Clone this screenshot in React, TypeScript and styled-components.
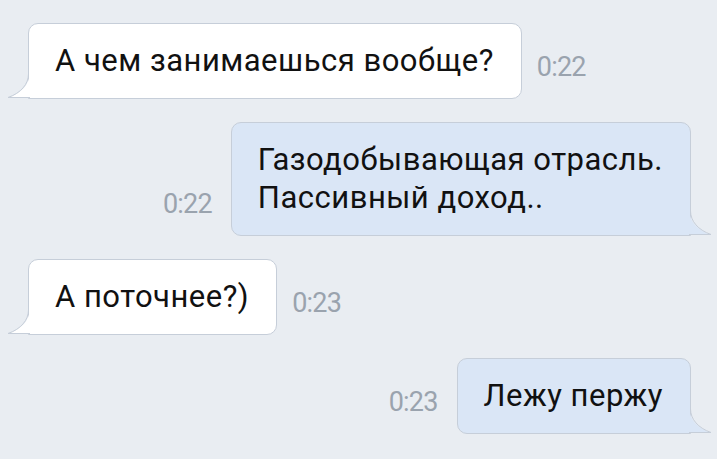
import styled, { createGlobalStyle } from "styled-components";

type Msg = {
  id: number;
  out: boolean;
  time: string;
  lines: string[];
};

const messages: Msg[] = [
  { id: 1, out: false, time: "0:22", lines: ["А чем занимаешься вообще?"] },
  {
    id: 2,
    out: true,
    time: "0:22",
    lines: ["Газодобывающая отрасль.", "Пассивный доход.."],
  },
  { id: 3, out: false, time: "0:23", lines: ["А поточнее?)"] },
  { id: 4, out: true, time: "0:23", lines: ["Лежу пержу"] },
];

const GlobalStyle = createGlobalStyle`
  html, body {
    margin: 0;
    padding: 0;
    background: #e9edf2;
  }
  body {
    font-family: Roboto, "Noto Sans", "Liberation Sans", sans-serif;
    -webkit-font-smoothing: antialiased;
  }
`;

const Tail = ({ out }: { out: boolean }) => (
  <TailSvg out={out} width="23" height="25" viewBox="0 0 23 25">
    <path
      d="M22.5 0 C22.5 10 15 19 1 24 L22.5 24 Z"
      fill={out ? "#dae6f6" : "#ffffff"}
      stroke="none"
    />
    <path
      d="M21.5 0 C21.5 10 14 19 1 23.5 L23 23.5"
      fill="none"
      stroke="#c6ced9"
      strokeWidth="1"
    />
  </TailSvg>
);

const App = () => {
  return (
    <>
      <GlobalStyle />
      <Chat>
        {messages.map((m) => (
          <Row key={m.id} out={m.out}>
            <Bubble out={m.out}>
              {m.lines.map((l, i) => (
                <Line key={i}>{l}</Line>
              ))}
              <Tail out={m.out} />
            </Bubble>
            <Time>{m.time}</Time>
          </Row>
        ))}
      </Chat>
    </>
  );
};

const Chat = styled.div`
  width: 717px;
  height: 459px;
  box-sizing: border-box;
  padding: 23px 26px 0 28px;
  display: flex;
  flex-direction: column;
  gap: 23px;
  overflow: hidden;
`;

const Row = styled.div<{ out: boolean }>`
  display: flex;
  flex-direction: ${(p) => (p.out ? "row-reverse" : "row")};
  align-items: flex-end;
  gap: ${(p) => (p.out ? "19px" : "15px")};
`;

const Bubble = styled.div<{ out: boolean }>`
  position: relative;
  box-sizing: border-box;
  padding: 18px 27px 18px 26px;
  background: ${(p) => (p.out ? "#dae6f6" : "#ffffff")};
  border: 1px solid #c6ced9;
  border-radius: 10px;
  ${(p) =>
    p.out ? "border-bottom-right-radius: 0;" : "border-bottom-left-radius: 0;"}
  color: #111;
  font-size: 31px;
  line-height: 38px;
  letter-spacing: 0.5px;
  white-space: nowrap;
`;

const Line = styled.div``;

const TailSvg = styled.svg<{ out: boolean }>`
  position: absolute;
  bottom: -1px;
  ${(p) => (p.out ? "right: -22px; transform: scaleX(-1);" : "left: -22px;")}
  overflow: visible;
`;

const Time = styled.div`
  color: #9aa3ae;
  font-size: 27px;
  line-height: 27px;
  letter-spacing: -0.8px;
  margin-bottom: 18px;
`;

export default App;
